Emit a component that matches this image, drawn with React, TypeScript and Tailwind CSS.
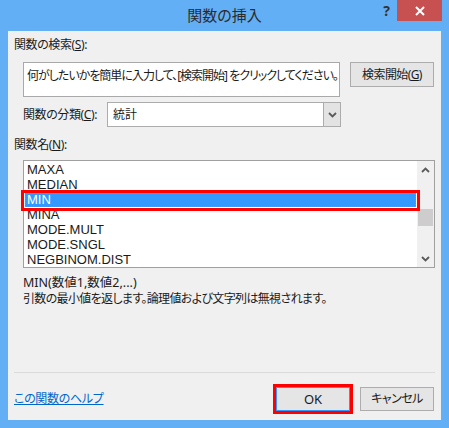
import React from "react";

const Chevron = ({ up = false }: { up?: boolean }) => (
  <svg width="9" height="6" viewBox="0 0 9 6" className="block">
    <path
      d={up ? "M1 5 L4.5 1.5 L8 5" : "M1 1 L4.5 4.5 L8 1"}
      fill="none"
      stroke="#5a5a5a"
      strokeWidth="1.8"
    />
  </svg>
);

const items = ["MAXA", "MEDIAN", "MIN", "MINA", "MODE.MULT", "MODE.SNGL", "NEGBINOM.DIST"];

export default function App() {
  return (
    <div
      className="w-[449px] h-[428px] bg-[#63aff5] flex flex-col text-[12px] text-[#1a1a1a] [font-feature-settings:'palt']"
      style={{ fontFamily: '"Noto Sans", "Noto Sans CJK JP", sans-serif' }}
    >
      {/* title bar */}
      <div className="h-[31px] grid grid-cols-[1fr_auto_1fr]">
        <div />
        <div className="pt-[5px] text-[15px] leading-[20px] text-[#2b2b2b]">関数の挿入</div>
        <div className="flex justify-end items-start pr-[7px]">
          <div className="mt-[3px] mr-[7px] text-[14px] leading-[16px] font-bold text-[#333]">?</div>
          <div className="w-[45px] h-[21px] bg-[#c75050] flex items-center justify-center">
            <svg width="10" height="10" viewBox="0 0 10 10">
              <path d="M1 1 L9 9 M9 1 L1 9" stroke="#fff" strokeWidth="2" />
            </svg>
          </div>
        </div>
      </div>

      {/* content */}
      <div className="mx-[8px] h-[389px] bg-[#f0f0f0] flex flex-col">
        <div className="ml-[6px] mt-[6px] leading-[16px] tracking-[-0.4px]">
          関数の検索(<span className="underline">S</span>):
        </div>

        <div className="ml-[15px] mt-[9px] flex items-start">
          <div className="w-[317px] h-[35px] bg-white border border-[#a9a9a9] pl-[3px] pt-[5px] leading-[16px] whitespace-nowrap tracking-[-1px]">
            何がしたいかを簡単に入力して、[検索開始] をクリックしてください。
          </div>
          <div className="ml-[10px] w-[84px] h-[25px] border border-[#adadad] bg-[#e5e5e5] flex items-center justify-center leading-[16px] tracking-[-0.6px] whitespace-nowrap">
            検索開始(<span className="underline">G</span>)
          </div>
        </div>

        <div className="ml-[15px] mt-[5px] flex items-center">
          <div className="w-[84px] leading-[16px] tracking-[-0.4px] whitespace-nowrap">
            関数の分類(<span className="underline">C</span>):
          </div>
          <div className="w-[234px] h-[25px] border border-[#acacac] bg-white flex">
            <div className="flex-1 pl-[5px] flex items-center leading-[16px]">統計</div>
            <div className="w-[17px] h-full bg-[#e3e3e3] border-l border-[#acacac] flex items-center justify-center">
              <Chevron />
            </div>
          </div>
        </div>

        <div className="ml-[6px] mt-[10px] leading-[16px] tracking-[-0.4px]">
          関数名(<span className="underline">N</span>):
        </div>

        <div className="ml-[15px] mt-[7px] w-[412px] h-[108px] border border-[#a0a0a0] bg-white flex relative">
          <div
            className="flex-1 pt-[1px] text-[13px]"
            style={{ fontFamily: '"Liberation Sans", Arial, sans-serif' }}
          >
            {items.map((it) =>
              it === "MIN" ? (
                <div
                  key={it}
                  className="mx-[1px] h-[15px] bg-[#3399ff] text-white border border-dotted border-[#b8874f] pl-[1px] leading-[13px]"
                >
                  {it}
                </div>
              ) : (
                <div key={it} className="h-[15px] pl-[3px] leading-[15px]">
                  {it}
                </div>
              )
            )}
          </div>
          <div className="w-[17px] h-full bg-[#f0f0f0] flex flex-col items-center">
            <div className="h-[17px] flex items-center justify-center">
              <Chevron up />
            </div>
            <div className="mt-[31px] w-[15px] h-[17px] bg-[#cdcdcd]" />
            <div className="flex-1" />
            <div className="h-[17px] flex items-center justify-center">
              <Chevron />
            </div>
          </div>
          <div className="absolute left-[-3px] top-[29px] w-[399px] h-[21px] border-[3px] border-[#ff0000]" />
        </div>

        <div className="ml-[15px] mt-[7px] leading-[16px] text-[12.5px]">MIN(数値1,数値2,...)</div>
        <div className="ml-[15px] leading-[16px] tracking-[-0.65px] whitespace-nowrap">
          引数の最小値を返します。論理値および文字列は無視されます。
        </div>

        <div className="ml-[6px] mt-[65px] w-[421px] h-[1px] bg-[#dadada]" />

        <div className="mt-[14px] flex items-center">
          <div className="ml-[6px] w-[262px] text-[#0066cc] underline leading-[16px] tracking-[-0.3px]">この関数のヘルプ</div>
          <div className="w-[74px] h-[24px] border border-[#3399ff] bg-[#e5e5e5] flex items-center justify-center leading-[16px] text-[13px] shadow-[0_0_0_3px_#ff0000]">
            OK
          </div>
          <div className="ml-[10px] w-[74px] h-[24px] border border-[#adadad] bg-[#e5e5e5] flex items-center justify-center leading-[16px] tracking-[-0.5px]">
            キャンセル
          </div>
        </div>
      </div>
    </div>
  );
}
